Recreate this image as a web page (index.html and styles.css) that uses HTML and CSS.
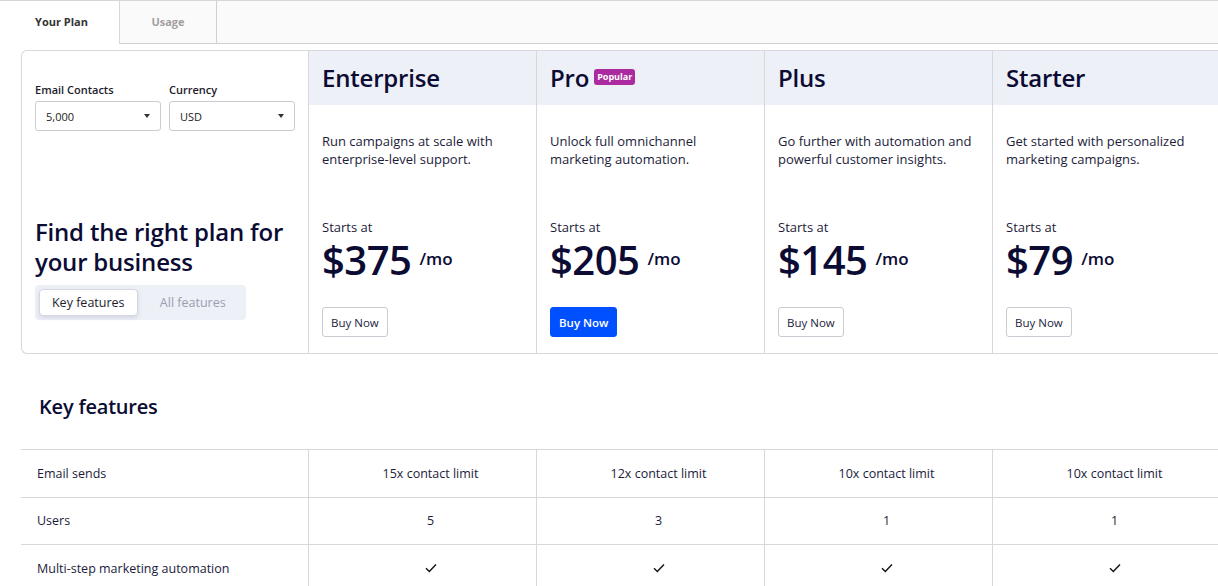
FILE: index.html
```html
<!DOCTYPE html>
<html>
<head>
<meta charset="utf-8">
<link rel="stylesheet" href="styles.css">
</head>
<body>
<div class="tabs">
  <div class="tab active">Your Plan</div>
  <div class="tab">Usage</div>
  <div class="tab-fill"></div>
</div>

<div class="card">
  <div class="intro">
    <div class="selects">
      <div class="field">
        <div class="label">Email Contacts</div>
        <div class="select"><span>5,000</span><span class="caret"></span></div>
      </div>
      <div class="field">
        <div class="label">Currency</div>
        <div class="select"><span>USD</span><span class="caret"></span></div>
      </div>
    </div>
    <h1 class="title">Find the right plan for your business</h1>
    <div class="toggle">
      <div class="toggle-btn on">Key features</div>
      <div class="toggle-btn">All features</div>
    </div>
  </div>

  <div class="plan">
    <div class="plan-head">Enterprise</div>
    <div class="plan-body">
      <p class="desc">Run campaigns at scale with enterprise-level support.</p>
      <div class="starts">Starts at</div>
      <div class="price">$375<span class="per">/mo</span></div>
      <div><button class="buy">Buy Now</button></div>
    </div>
  </div>
  <div class="plan">
    <div class="plan-head">Pro <span class="badge">Popular</span></div>
    <div class="plan-body">
      <p class="desc">Unlock full omnichannel marketing automation.</p>
      <div class="starts">Starts at</div>
      <div class="price">$205<span class="per">/mo</span></div>
      <div><button class="buy primary">Buy Now</button></div>
    </div>
  </div>
  <div class="plan">
    <div class="plan-head">Plus</div>
    <div class="plan-body">
      <p class="desc">Go further with automation and powerful customer insights.</p>
      <div class="starts">Starts at</div>
      <div class="price">$145<span class="per">/mo</span></div>
      <div><button class="buy">Buy Now</button></div>
    </div>
  </div>
  <div class="plan">
    <div class="plan-head">Starter</div>
    <div class="plan-body">
      <p class="desc">Get started with personalized marketing campaigns.</p>
      <div class="starts">Starts at</div>
      <div class="price">$79<span class="per">/mo</span></div>
      <div><button class="buy">Buy Now</button></div>
    </div>
  </div>
</div>

<h2 class="section">Key features</h2>

<div class="table">
  <div class="row">
    <div class="cell name">Email sends</div>
    <div class="cell">15x contact limit</div>
    <div class="cell">12x contact limit</div>
    <div class="cell">10x contact limit</div>
    <div class="cell">10x contact limit</div>
  </div>
  <div class="row">
    <div class="cell name">Users</div>
    <div class="cell">5</div>
    <div class="cell">3</div>
    <div class="cell">1</div>
    <div class="cell">1</div>
  </div>
  <div class="row">
    <div class="cell name">Multi-step marketing automation</div>
    <div class="cell"><svg class="check" viewBox="0 0 12 10" width="12" height="10"><path d="M1 5.2 L4.3 8.4 L11 1.4" fill="none" stroke="#111" stroke-width="1.4"/></svg></div>
    <div class="cell"><svg class="check" viewBox="0 0 12 10" width="12" height="10"><path d="M1 5.2 L4.3 8.4 L11 1.4" fill="none" stroke="#111" stroke-width="1.4"/></svg></div>
    <div class="cell"><svg class="check" viewBox="0 0 12 10" width="12" height="10"><path d="M1 5.2 L4.3 8.4 L11 1.4" fill="none" stroke="#111" stroke-width="1.4"/></svg></div>
    <div class="cell"><svg class="check" viewBox="0 0 12 10" width="12" height="10"><path d="M1 5.2 L4.3 8.4 L11 1.4" fill="none" stroke="#111" stroke-width="1.4"/></svg></div>
  </div>
</div>
</body>
</html>
```

FILE: styles.css
```css
* { box-sizing: border-box; }
html, body { margin: 0; padding: 0; }
body {
  width: 1218px;
  height: 586px;
  overflow: hidden;
  background: #fff;
  font-family: "Open Sans", "Liberation Sans", sans-serif;
  color: #1c1c3a;
}

.tabs {
  display: flex;
  height: 44px;
  border-top: 1px solid #d6d6d6;
}
.tab {
  width: 119px;
  display: flex;
  align-items: center;
  justify-content: center;
  padding-bottom: 2px;
  font-size: 11px;
  font-weight: 700;
  color: #a0a0a0;
  background: #fafafa;
  border-bottom: 1px solid #d0d0d0;
}
.tab + .tab {
  width: 98px;
  border-left: 1px solid #d8d8d8;
  border-right: 1px solid #d0d0d0;
}
.tab.active {
  background: #fff;
  color: #333;
  padding-left: 4px;
  border-bottom-color: #fff;
}
.tab-fill {
  flex: 1;
  background: #fafafa;
  border-bottom: 1px solid #d0d0d0;
}

.card {
  margin: 6px 0 0 21px;
  display: grid;
  grid-template-columns: 286px repeat(4, 228px);
  border: 1px solid #d6d8de;
  border-right: none;
  border-radius: 6px 0 0 6px;
  height: 304px;
}

.intro {
  padding: 32px 13px 0 13px;
}
.selects { display: flex; gap: 8px; }
.field { width: 126px; }
.label {
  font-size: 11px;
  font-weight: 600;
  line-height: 14px;
  color: #1c1c2c;
  margin-bottom: 4px;
}
.select {
  height: 30px;
  border: 1px solid #c9ccd3;
  border-radius: 3px;
  display: flex;
  align-items: center;
  justify-content: space-between;
  padding: 0 10px 0 10px;
  font-size: 11px;
  color: #222;
}
.caret {
  width: 0; height: 0;
  border-left: 3.5px solid transparent;
  border-right: 3.5px solid transparent;
  border-top: 4px solid #333;
}
.title {
  margin: 86px 0 0 0;
  font-size: 24px;
  font-weight: 600;
  line-height: 30px;
  letter-spacing: -0.2px;
  color: #0b0b33;
  width: 262px;
}
.toggle {
  margin-top: 8px;
  width: 211px;
  height: 35px;
  background: #edf0f7;
  border-radius: 4px;
  padding: 4px;
  display: flex;
  gap: 6px;
}
.toggle-btn {
  width: 100px;
  height: 27px;
  display: flex;
  align-items: center;
  justify-content: center;
  font-size: 12.5px;
  color: #9a9db0;
}
.toggle-btn.on {
  background: #fff;
  color: #1c1c2c;
  border: 1px solid #d4d7df;
  border-radius: 4px;
  box-shadow: 0 2px 4px rgba(30, 40, 90, 0.12);
}

.plan {
  border-left: 1px solid #d6d8de;
  display: flex;
  flex-direction: column;
}
.plan-head {
  height: 54px;
  background: #edf0f7;
  display: flex;
  align-items: center;
  padding: 0 13px 2px 13px;
  font-size: 24px;
  font-weight: 600;
  letter-spacing: -0.2px;
  color: #0b0b33;
}
.badge {
  margin-left: 5px;
  background: #ab2aa0;
  color: #fff;
  font-size: 9px;
  font-weight: 700;
  letter-spacing: 0;
  border-radius: 3px;
  padding: 2px 3px;
  line-height: 12px;
}
.plan-body {
  padding: 27px 13px 0 13px;
}
.desc {
  margin: 0;
  height: 86px;
  font-size: 13px;
  line-height: 18px;
  color: #1c1c3a;
}
.starts {
  font-size: 13px;
  line-height: 18px;
  color: #1c1c3a;
}
.price {
  margin-top: 3px;
  font-size: 40px;
  font-weight: 600;
  line-height: 42px;
  letter-spacing: -0.5px;
  color: #0b0b33;
  display: flex;
  align-items: center;
  height: 42px;
}
.per {
  font-size: 17px;
  font-weight: 600;
  letter-spacing: 0;
  margin-left: 8px;
  position: relative;
  top: -1px;
}
.buy {
  margin-top: 26px;
  height: 30px;
  padding: 0 8px;
  font-family: inherit;
  font-size: 11.5px;
  color: #1c1c3a;
  background: #fff;
  border: 1px solid #c9ccd3;
  border-radius: 3px;
}
.buy.primary {
  background: #0050ff;
  border-color: #0050ff;
  color: #fff;
  font-weight: 600;
}

.section {
  margin: 41px 0 0 39px;
  font-size: 20px;
  font-weight: 600;
  line-height: 24px;
  letter-spacing: -0.2px;
  color: #0b0b33;
}

.table {
  margin: 30px 0 0 21px;
  border-top: 1px solid #d6d8de;
}
.row {
  display: grid;
  grid-template-columns: 287px repeat(4, 228px);
  height: 47.5px;
  border-bottom: 1px solid #d6d8de;
}
.cell {
  display: flex;
  align-items: center;
  justify-content: center;
  padding-left: 16px;
  font-size: 12.5px;
  color: #1c1c3a;
  border-left: 1px solid #d6d8de;
}
.cell.name {
  justify-content: flex-start;
  padding-left: 16px;
  border-left: none;
}
.check { display: block; }
```
